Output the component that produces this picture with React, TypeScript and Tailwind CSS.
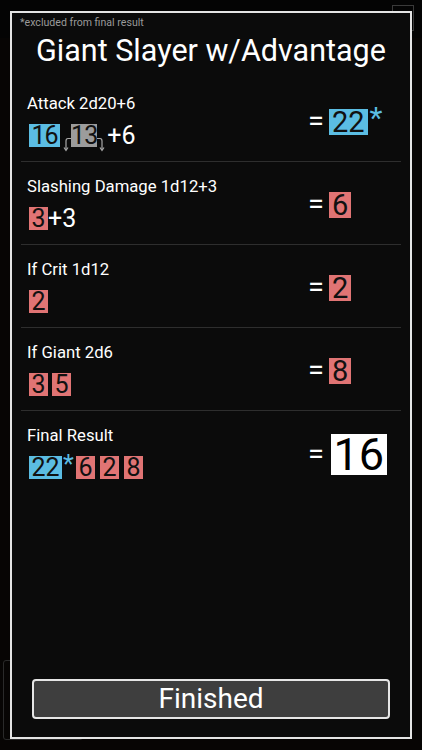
import React from 'react';

type Die = { v: string; c: 'blue' | 'red' | 'gray'; className?: string };

const dieBg = {
  blue: 'bg-[#5bbde3]',
  red: 'bg-[#e07474]',
  gray: 'bg-[#9c9c9c]',
};

function SmallDie({ v, c, className = 'px-[2.5px]' }: Die) {
  return (
    <span className={`inline-block ${dieBg[c]} text-[#111] text-[25px] leading-[23px] h-[23px] ${className}`}>{v}</span>
  );
}

function BigDie({ v, c }: Die) {
  return (
    <span className={`inline-block ${dieBg[c]} text-[#111] text-[29px] leading-[26px] h-[26px] px-[3px]`}>{v}</span>
  );
}

function HookArrow({ flip }: { flip?: boolean }) {
  return (
    <svg width="9" height="16" viewBox="0 0 9 16" className={`self-end mb-[-5px] ${flip ? '-scale-x-100' : ''}`}>
      <path d="M9 2.5 H6 Q4 2.5 4 5 V14" fill="none" stroke="#a8a8a8" strokeWidth="1.2" />
      <path d="M2 11.5 L4 14.5 L6 11.5" fill="none" stroke="#a8a8a8" strokeWidth="1.2" />
    </svg>
  );
}

function Row({ label, children, result, last }: { label: string; children: React.ReactNode; result: React.ReactNode; last?: boolean }) {
  return (
    <div className={`flex h-[83px] ${last ? '' : 'border-b border-[#2e2e2e]'}`}>
      <div className="w-[287px] pt-[15px]">
        <p className="pl-[6px] text-[16.7px] leading-[20px] text-white">{label}</p>
        <div className="flex items-center pl-[8px] mt-[10px] h-[23px]">{children}</div>
      </div>
      <div className="flex items-center pt-[3px] text-white">
        <span className="text-[29px] leading-none mr-[5px]">=</span>
        {result}
      </div>
    </div>
  );
}

export default function App() {
  return (
    <div className="relative w-[422px] h-[750px] overflow-hidden bg-[#070504] font-['Roboto',sans-serif]">
      {/* backdrop */}
      <div className="absolute inset-x-0 top-0 h-[38px] bg-[#040404]" />
      <div className="absolute left-[392px] top-[5px] w-[22px] h-[26px] border border-[#3a3a3a]" />
      <div className="absolute left-[3px] top-[660px] w-[80px] h-[80px] border border-[#2a2a2a] rounded-[3px]" />

      <div className="relative mx-[10px] mt-[11px] h-[728px] border-2 border-[#e4e4e4] bg-[#0b0b0b] flex flex-col px-[9px]">
        <p className="text-[10.6px] leading-[14px] text-[#9a9a9a] mt-[3px] -ml-[1px]">*excluded from final result</p>
        <h1 className="text-center text-[30.5px] leading-[36px] text-white mt-[3px] mb-[10px]">Giant Slayer w/Advantage</h1>

        <Row label="Attack 2d20+6" result={<><BigDie v="22" c="blue" /><span className="text-[#5bbde3] text-[30px] leading-none ml-[2px] -mt-[8px]">*</span></>}>
          <SmallDie v="16" c="blue" className="px-[2.5px] tracking-[-1px]" />
          <span className="w-[2px]" />
          <HookArrow />
          <SmallDie v="13" c="gray" className="px-0 tracking-[-1px]" />
          <HookArrow flip />
          <span className="text-white text-[25px] leading-[23px] ml-[1px]">+6</span>
        </Row>

        <Row label="Slashing Damage 1d12+3" result={<BigDie v="6" c="red" />}>
          <SmallDie v="3" c="red" />
          <span className="text-white text-[25px] leading-[23px]">+3</span>
        </Row>

        <Row label="If Crit 1d12" result={<BigDie v="2" c="red" />}>
          <SmallDie v="2" c="red" />
        </Row>

        <Row label="If Giant 2d6" result={<BigDie v="8" c="red" />}>
          <div className="flex gap-[4px]">
            <SmallDie v="3" c="red" />
            <SmallDie v="5" c="red" />
          </div>
        </Row>

        <Row label="Final Result" last result={<span className="inline-block bg-white text-black text-[45px] leading-[41px] h-[41px] px-[2.5px] ml-[2px]">16</span>}>
          <SmallDie v="22" c="blue" />
          <span className="text-[#5bbde3] text-[25px] leading-none ml-[1px] mr-[2px] -mt-[6px]">*</span>
          <div className="flex gap-[5px]">
            <SmallDie v="6" c="red" />
            <SmallDie v="2" c="red" />
            <SmallDie v="8" c="red" />
          </div>
        </Row>

        <div className="flex-1" />
        <button className="mx-[11px] mb-[18px] h-[40px] rounded-[4px] border-2 border-[#e6e6e6] bg-[#3e3e3e] text-white text-[28px] leading-none">
          Finished
        </button>
      </div>
    </div>
  );
}
